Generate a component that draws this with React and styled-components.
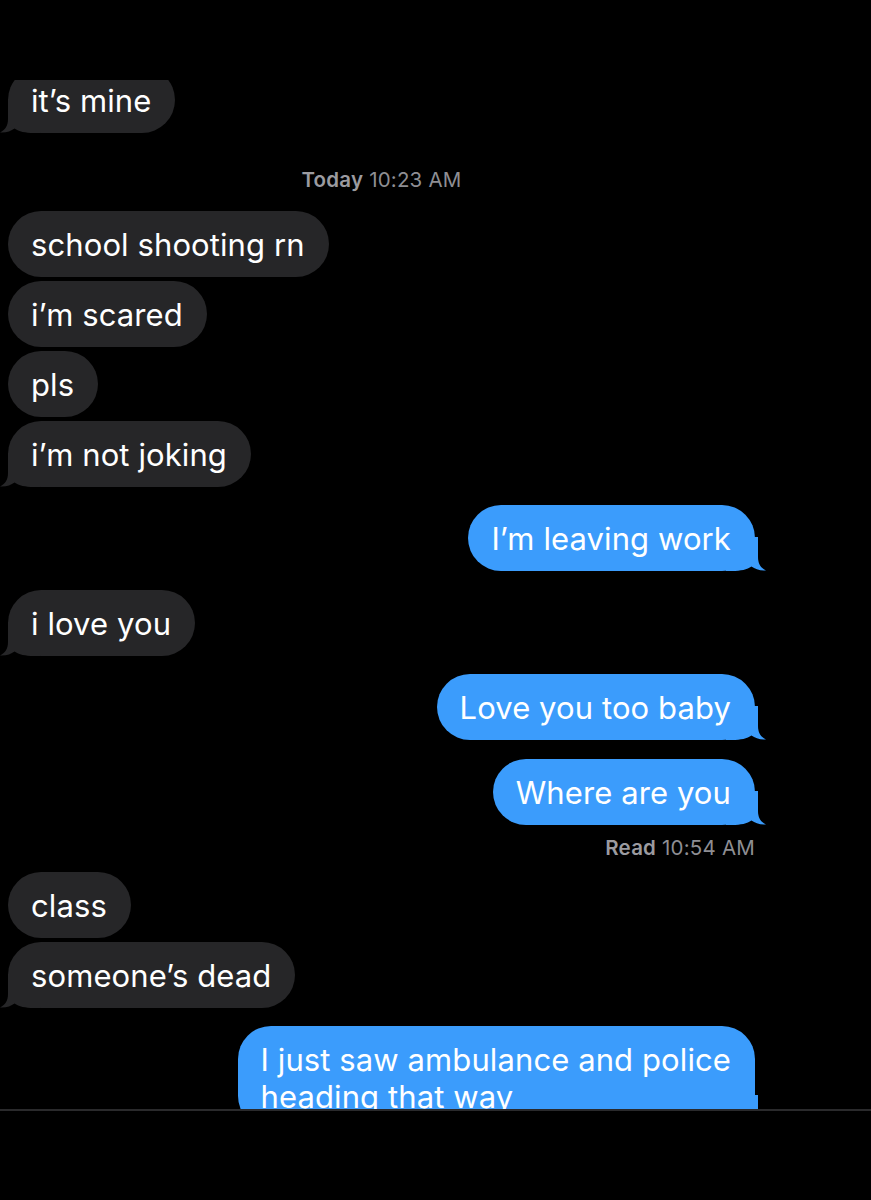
import React from 'react';
import styled, { createGlobalStyle } from 'styled-components';

const GREY = '#262628';
const BLUE = '#3b9cfc';

const GlobalStyle = createGlobalStyle`
  html, body {
    margin: 0;
    padding: 0;
    background: #000;
  }
  body {
    font-family: 'Inter', 'Liberation Sans', sans-serif;
    -webkit-font-smoothing: antialiased;
  }
`;

const messages = [
  { from: 'them', text: 'it’s mine', tail: true, gap: 0 },
  { type: 'stamp', bold: 'Today', rest: '10:23 AM' },
  { from: 'them', text: 'school shooting rn', gap: 20 },
  { from: 'them', text: 'i’m scared', gap: 4 },
  { from: 'them', text: 'pls', gap: 4 },
  { from: 'them', text: 'i’m not joking', tail: true, gap: 4 },
  { from: 'me', text: 'I’m leaving work', tail: true, gap: 18 },
  { from: 'them', text: 'i love you', tail: true, gap: 19 },
  { from: 'me', text: 'Love you too baby', tail: true, gap: 18 },
  { from: 'me', text: 'Where are you', tail: true, gap: 19 },
  { type: 'read', bold: 'Read', rest: '10:54 AM' },
  { from: 'them', text: 'class', gap: 13 },
  { from: 'them', text: 'someone’s dead', tail: true, gap: 4 },
  { from: 'me', lines: ['I just saw ambulance and police', 'heading that way'], tail: true, gap: 18 },
];

function Tail({ mine }) {
  return (
    <TailSvg $mine={mine} width="40" height="34" viewBox="0 0 40 34">
      <path
        d="M8 0 L8 20 C8 27 5 31 0 33.5 C6 34 11 32 14.5 29.5 C19 32.5 25 34 34 34 L40 34 L40 0 Z"
        fill={mine ? BLUE : GREY}
      />
    </TailSvg>
  );
}

export default function App() {
  return (
    <Page>
      <GlobalStyle />
      <Viewport>
        <Thread>
          {messages.map((m, i) => {
            if (m.type === 'stamp') {
              return (
                <Stamp key={i}>
                  <b>{m.bold}</b> {m.rest}
                </Stamp>
              );
            }
            if (m.type === 'read') {
              return (
                <Receipt key={i}>
                  <b>{m.bold}</b> {m.rest}
                </Receipt>
              );
            }
            const mine = m.from === 'me';
            return (
              <Row key={i} $mine={mine} $gap={m.gap}>
                <Bubble $mine={mine}>
                  {m.lines
                    ? m.lines.map((l, j) => (
                        <React.Fragment key={j}>
                          {l}
                          {j < m.lines.length - 1 && <br />}
                        </React.Fragment>
                      ))
                    : m.text}
                  {m.tail && <Tail mine={mine} />}
                </Bubble>
              </Row>
            );
          })}
        </Thread>
      </Viewport>
      <Divider />
    </Page>
  );
}

const Page = styled.div`
  width: 871px;
  height: 1200px;
  background: #000;
  padding-top: 80px;
  box-sizing: border-box;
  overflow: hidden;
`;

const Viewport = styled.div`
  height: 1029px;
  overflow: hidden;
`;

const Thread = styled.div`
  width: 747px;
  margin: -13px 0 0 8px;
  display: flex;
  flex-direction: column;
`;

const Row = styled.div`
  display: flex;
  justify-content: ${(p) => (p.$mine ? 'flex-end' : 'flex-start')};
  margin-top: ${(p) => p.$gap}px;
`;

const Bubble = styled.div`
  position: relative;
  z-index: 0;
  background: ${(p) => (p.$mine ? BLUE : GREY)};
  color: #fff;
  font-size: 31px;
  line-height: 37px;
  padding: 14.5px 24px 14.5px 23px;
  border-radius: 33px;
  letter-spacing: 0.1px;
  white-space: nowrap;
`;

const TailSvg = styled.svg`
  position: absolute;
  bottom: 0;
  z-index: -1;
  ${(p) => (p.$mine ? 'right: -11px; transform: scaleX(-1);' : 'left: -8px;')}
`;

const Stamp = styled.div`
  margin-top: 36px;
  height: 22px;
  line-height: 22px;
  text-align: center;
  font-size: 20.5px;
  letter-spacing: 0.2px;
  color: #8e8e93;
  b {
    font-weight: 600;
    color: #9b9ba0;
  }
`;

const Receipt = styled(Stamp)`
  margin-top: 12px;
  text-align: right;
`;

const Divider = styled.div`
  height: 2px;
  background: #2a2a2c;
`;
